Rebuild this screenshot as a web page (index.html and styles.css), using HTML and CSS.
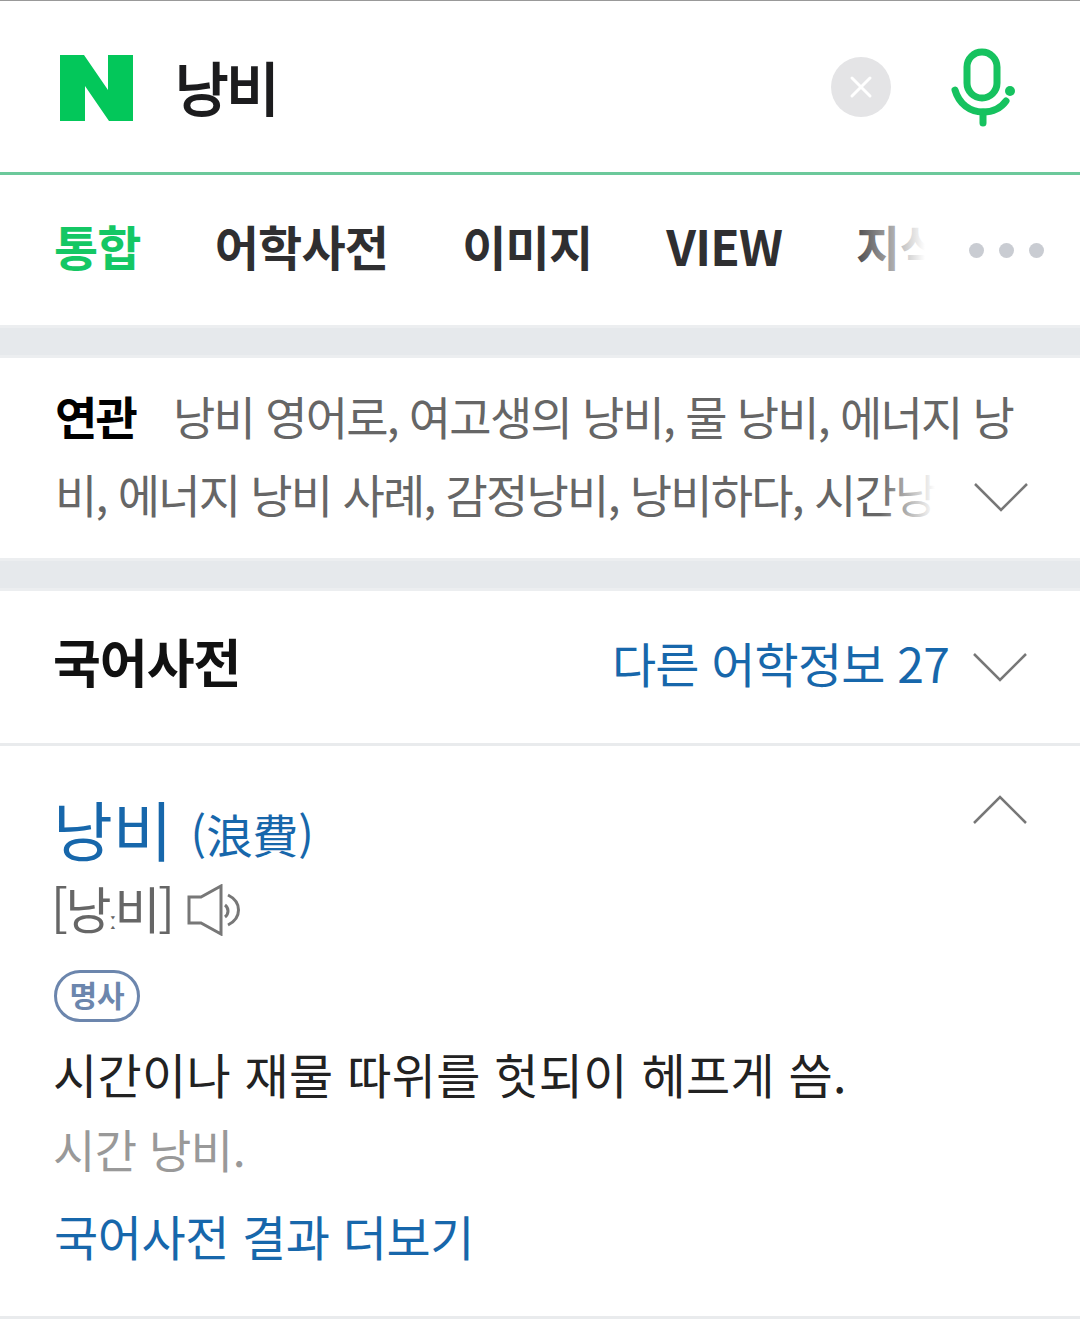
FILE: index.html
```html
<!DOCTYPE html>
<html lang="ko">
<head>
  <meta charset="UTF-8" />
  <meta name="viewport" content="width=device-width, initial-scale=1" />
  <title>낭비 : 네이버 통합검색</title>
  <link rel="stylesheet" href="styles.css">
</head>
<body>

  <header class="search-bar">
    <svg class="logo" viewBox="0 0 73 66" aria-label="NAVER">
      <polygon points="0,0 24,0 48,35 48,0 73,0 73,66 49,66 25,31 25,66 0,66" fill="#03c75a" />
    </svg>
    <div class="query">낭비</div>
    <svg class="clear" viewBox="0 0 60 60" aria-label="지우기">
      <circle cx="30" cy="30" r="30" fill="#e4e4e6" />
      <path d="M21 21 L39 39 M39 21 L21 39" stroke="#fff" stroke-width="3" stroke-linecap="round" />
    </svg>
    <svg class="mic" viewBox="0 0 68 80" aria-label="음성검색">
      <rect x="17" y="4" width="30" height="46" rx="15" fill="none" stroke="#16c25f" stroke-width="7" />
      <path d="M5 42 C9 56 20 64 33 64 C43 64 51 60 56 53" fill="none" stroke="#16c25f" stroke-width="7" stroke-linecap="round" />
      <path d="M33 64 V75" stroke="#16c25f" stroke-width="7" stroke-linecap="round" />
      <circle cx="60" cy="43" r="5" fill="#16c25f" />
    </svg>
  </header>

  <nav class="tabs">
    <div class="tab-list">
      <a class="tab active">통합</a>
      <a class="tab">어학사전</a>
      <a class="tab">이미지</a>
      <a class="tab">VIEW</a>
      <a class="tab">지식iN</a>
    </div>
    <div class="tab-fade"></div>
    <div class="more-dots"><i></i><i></i><i></i></div>
  </nav>

  <div class="band"></div>

  <section class="related">
    <div class="related-text">
      <div><strong>연관</strong>낭비 영어로, 여고생의 낭비, 물 낭비, 에너지 낭</div>
      <div>비, 에너지 낭비 사례, 감정낭비, 낭비하다, 시간낭비</div>
    </div>
    <div class="related-fade"></div>
    <svg class="chevron related-chevron" viewBox="0 0 54 30"><path d="M1 2 L27 28 L53 2" /></svg>
  </section>

  <div class="band"></div>

  <section class="dict-head">
    <h2>국어사전</h2>
    <a class="other-info">다른 어학정보 27</a>
    <svg class="chevron" viewBox="0 0 54 30"><path d="M1 2 L27 28 L53 2" /></svg>
  </section>

  <section class="entry">
    <div class="entry-title">
      <h3>낭비</h3>
      <span class="hanja">(浪費)</span>
      <svg class="chevron" viewBox="0 0 54 30"><path d="M1 28 L27 2 L53 28" /></svg>
    </div>
    <div class="pron">
      <span>[낭<b class="long">ː</b>비]</span>
      <svg class="speaker" viewBox="0 0 54 52">
        <path d="M2 13 H14 L34 2 V50 L14 39 H2 Z" />
        <path d="M38 21 C42 24 42 30 38 33" />
        <path d="M41 11 C55 18 55 34 41 41" />
      </svg>
    </div>
    <span class="pos">명사</span>
    <p class="meaning">시간이나 재물 따위를 헛되이 헤프게 씀.</p>
    <p class="example">시간 낭비.</p>
    <a class="more-link">국어사전 결과 더보기</a>
  </section>

</body>
</html>
```

FILE: styles.css
```css
:root {
  --green: #03c75a;
  --blue: #1767ab;
  --band: #e6e9ec;
  --line: #e9ebed;
  --text: #1c1c1e;
  --muted: #666;
}

* {
  box-sizing: border-box;
}

body {
  margin: 0;
  font-family: "Noto Sans CJK KR", "Noto Sans", sans-serif;
  background: #fff;
  color: var(--text);
}

.search-bar {
  height: 175px;
  display: flex;
  align-items: center;
  padding: 0 62px 0 60px;
  border-top: 1px solid #999;
  border-bottom: 3px solid #6cc99b;
}

.logo {
  width: 73px;
  height: 66px;
  margin-top: 3px;
}

.query {
  margin: 0 0 2px 42px;
  font-size: 58px;
  line-height: 1;
  letter-spacing: -2px;
  -webkit-text-stroke: 2px var(--text);
  flex: 1;
}

.clear {
  width: 60px;
  height: 60px;
}

.mic {
  width: 68px;
  height: 80px;
  margin: 2px 0 0 59px;
}

.tabs {
  position: relative;
  height: 150px;
  display: flex;
  align-items: center;
  padding: 0 0 10px 54px;
}

.tab-list {
  display: flex;
  gap: 74px;
  white-space: nowrap;
}

.tab {
  font-size: 48px;
  font-weight: 700;
  color: #2f2f31;
  letter-spacing: -0.8px;
}

.tab.active {
  color: #14c764;
}

.tab-fade {
  position: absolute;
  top: 0;
  left: 845px;
  right: 0;
  height: 100%;
  background: linear-gradient(to right, rgba(255, 255, 255, 0), #fff 80px);
}

.more-dots {
  position: absolute;
  top: 68px;
  right: 36px;
  display: flex;
  gap: 15px;
}

.more-dots i {
  width: 15px;
  height: 15px;
  border-radius: 50%;
  background: #c9ccd2;
}

.band {
  height: 33px;
  background: var(--band);
  border-top: 3px solid #eceef0;
  border-bottom: 3px solid #eceef0;
}

.related {
  position: relative;
  height: 200px;
}

.related-text {
  padding: 18px 0 0 55px;
  font-size: 46px;
  line-height: 78px;
  color: var(--muted);
  white-space: nowrap;
  letter-spacing: -1.8px;
}

.related-text strong {
  color: #000;
  font-weight: 700;
  margin-right: 37px;
}

.related-fade {
  position: absolute;
  top: 90px;
  bottom: 0;
  left: 880px;
  right: 0;
  background: linear-gradient(to right, rgba(255, 255, 255, 0), #fff 55px);
}

.chevron {
  width: 54px;
  height: 30px;
  fill: none;
  stroke: #777;
  stroke-width: 2.5;
}

.related-chevron {
  position: absolute;
  left: 974px;
  top: 124px;
}

.dict-head {
  height: 155px;
  display: flex;
  align-items: center;
  padding: 0 53px;
  border-bottom: 3px solid var(--line);
}

.dict-head h2 {
  margin: 0 0 14px;
  flex: 1;
  font-size: 52px;
  font-weight: 700;
  color: #111;
  letter-spacing: -1px;
}

.other-info {
  font-size: 48px;
  color: var(--blue);
  margin: 0 24px 10px 0;
  letter-spacing: -0.8px;
}

.entry {
  height: 573px;
  padding: 34px 53px 0;
  border-bottom: 3px solid var(--line);
}

.entry-title {
  display: flex;
  align-items: flex-start;
  color: var(--blue);
}

.entry-title h3 {
  margin: 0;
  font-size: 65px;
  line-height: 96px;
  font-weight: 400;
}

.hanja {
  font-size: 46px;
  line-height: 96px;
  margin: 5px 0 0 18px;
  flex: 1;
}

.entry-title .chevron {
  margin-top: 15px;
}

.pron {
  display: flex;
  align-items: center;
  gap: 14px;
  margin: -4px 0 0 -2px;
  font-size: 50px;
  line-height: 60px;
  letter-spacing: -2.4px;
  color: var(--muted);
}

.long {
  font-weight: 400;
  font-size: 24px;
}

.speaker {
  width: 54px;
  height: 52px;
  margin-bottom: 6px;
  fill: none;
  stroke: #777;
  stroke-width: 3;
}

.pos {
  display: block;
  width: 86px;
  height: 52px;
  margin: 21px 0 0 1px;
  border: 3px solid #6c86ad;
  border-radius: 26px;
  color: #6c86ad;
  font-size: 30px;
  font-weight: 700;
  line-height: 43px;
  text-align: center;
}

.meaning {
  margin: 17px 0 0;
  font-size: 48px;
  line-height: 68px;
  letter-spacing: 0.3px;
  color: #222;
}

.example {
  margin: 8px 0 0;
  font-size: 46px;
  line-height: 66px;
  letter-spacing: -0.5px;
  color: #999;
}

.more-link {
  display: block;
  margin: 20px 0 0 1px;
  font-size: 48px;
  line-height: 68px;
  letter-spacing: -0.4px;
  color: var(--blue);
}
```
